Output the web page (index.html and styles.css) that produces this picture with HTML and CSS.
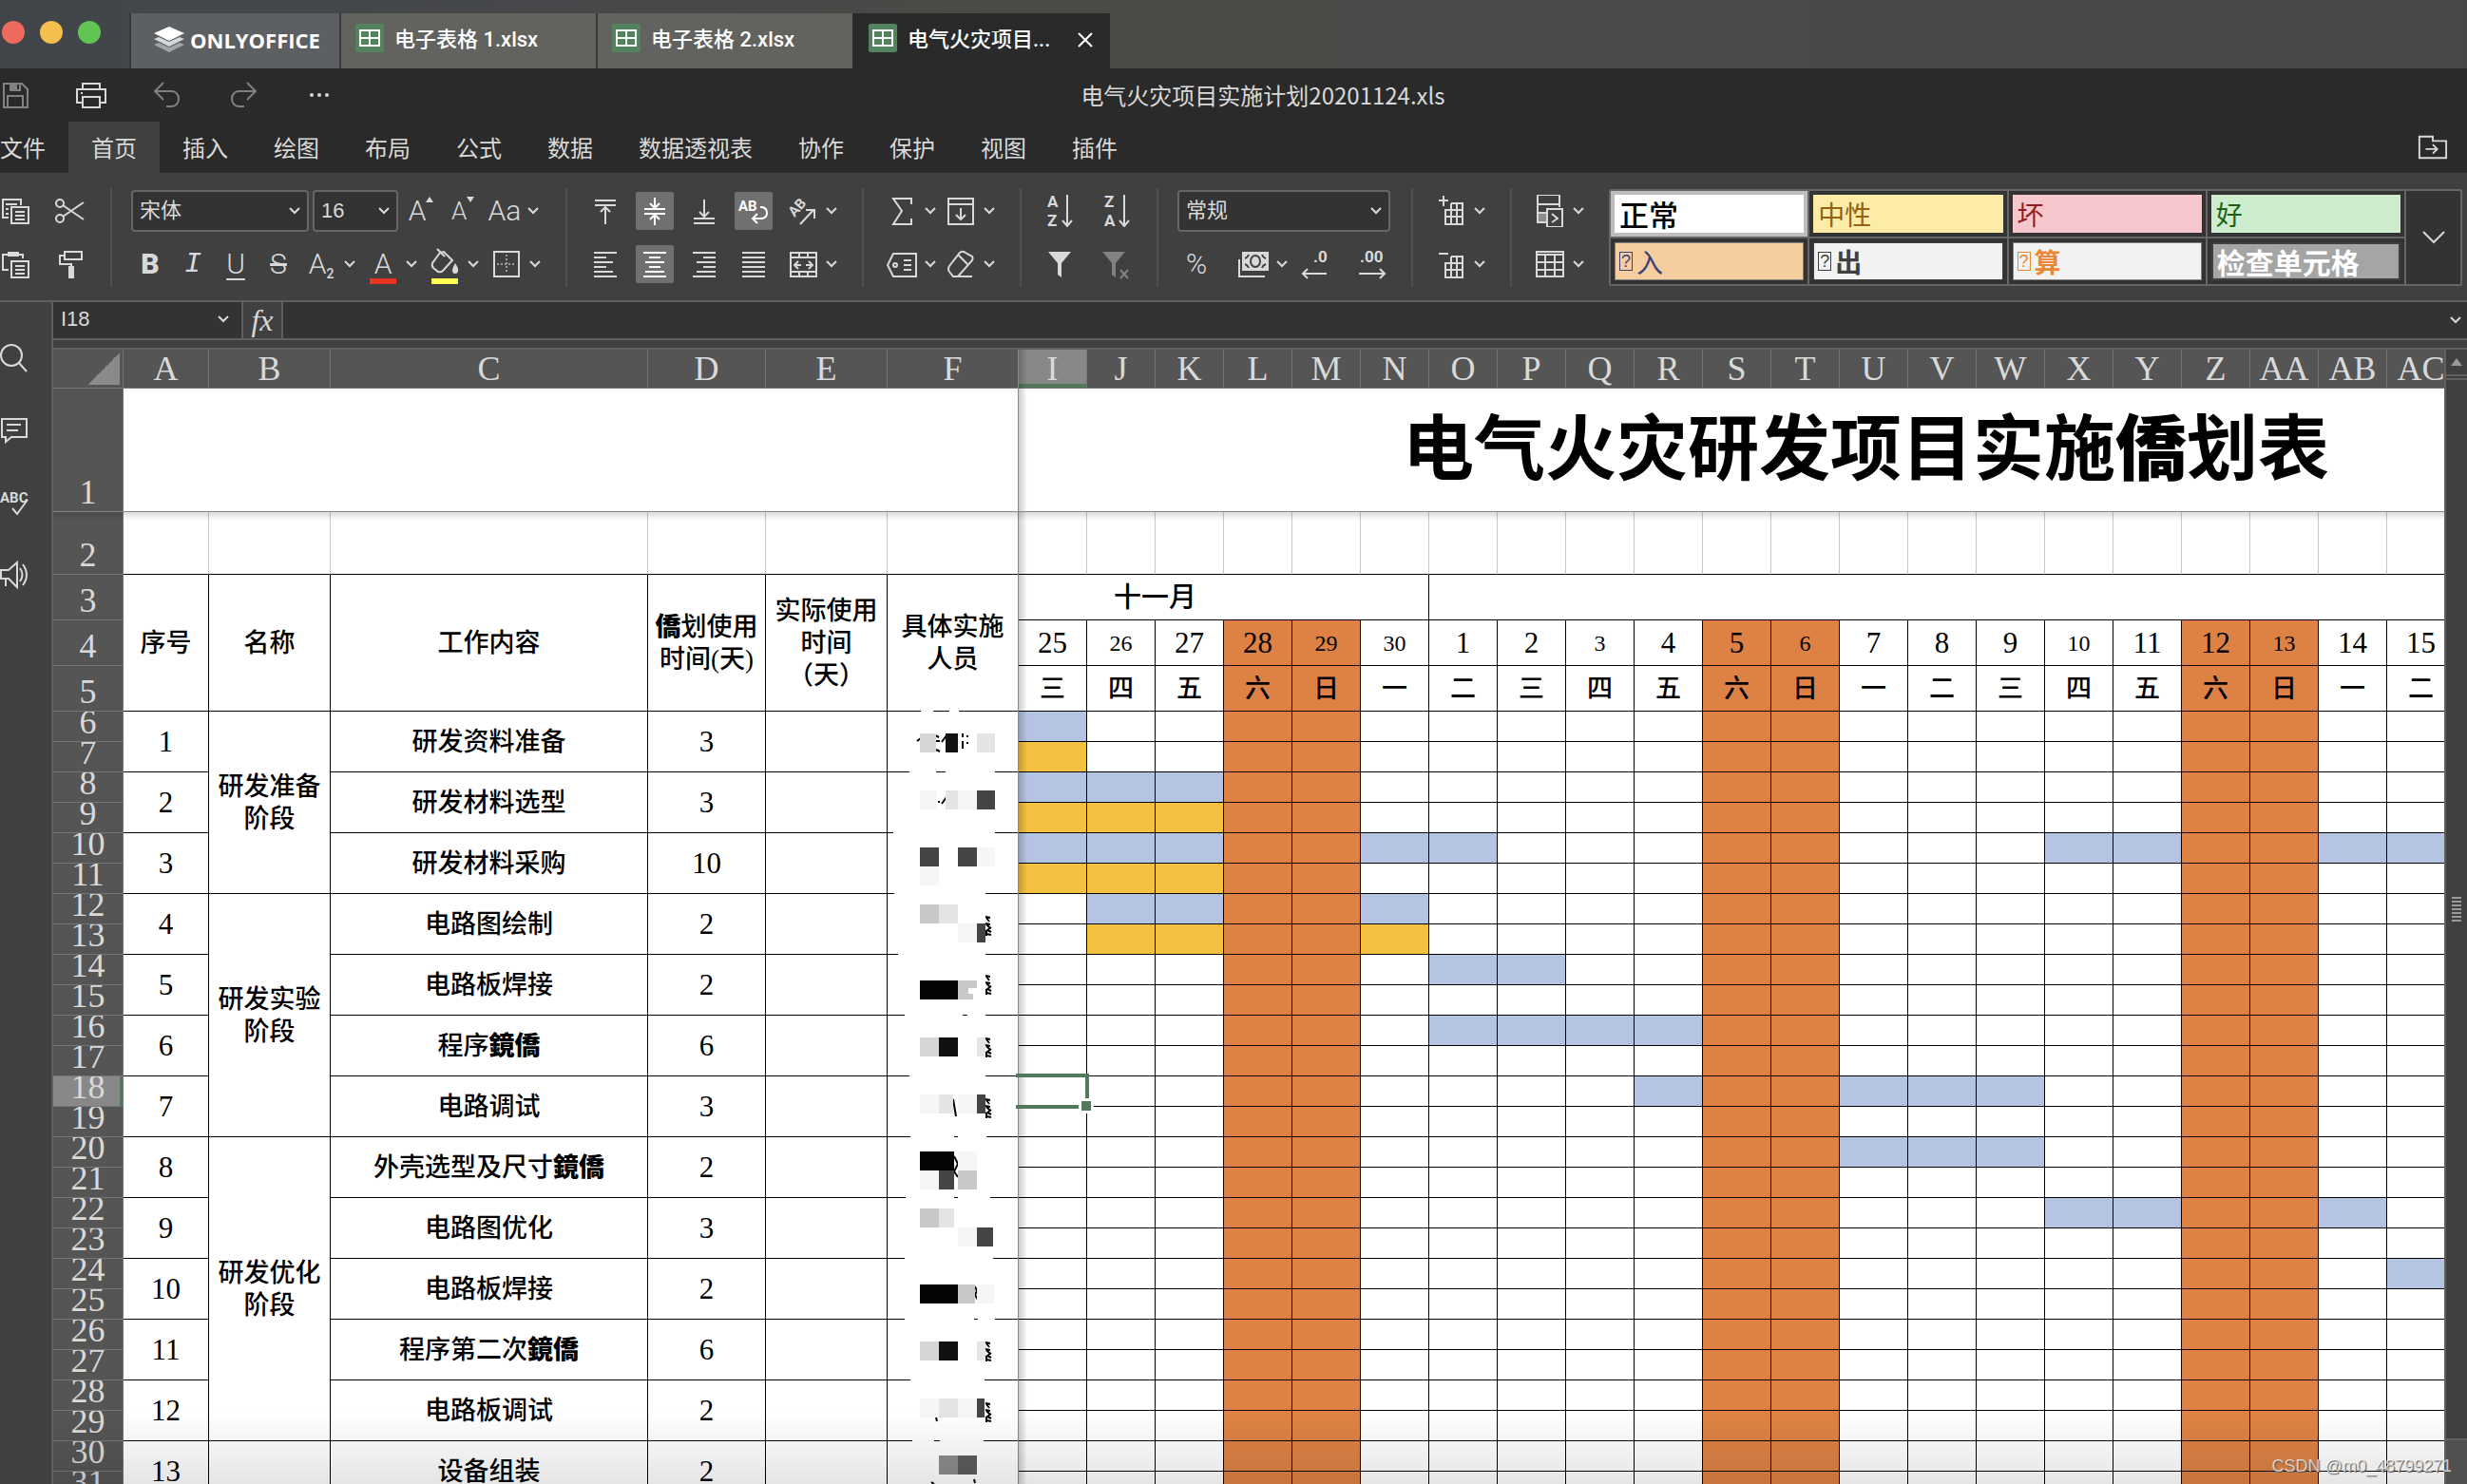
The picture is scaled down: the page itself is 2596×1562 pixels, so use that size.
FILE: index.html
```html
<!DOCTYPE html>
<html lang="zh-CN">
<head>
<meta charset="utf-8">
<title>电气火灾项目实施计划20201124.xls</title>
<link rel="stylesheet" href="styles.css">
</head>
<body>
<svg class="sprite" aria-hidden="true">
  <symbol id="caret" viewBox="0 0 12 8"><path d="M1 1l5 5 5-5"/></symbol>
  <symbol id="sheet" viewBox="0 0 30 30"><rect width="30" height="30" rx="2" fill="#52835d" stroke="none"/><path d="M5 7h20v16H5zM15 7v16M5 15h20" stroke="#fff"/></symbol>
  <symbol id="save" viewBox="0 0 32 32"><path d="M4 4h19l6 6v19H4zM8 29V17h16v12M11 4v7h10V4"/><path d="M11 4h6v7h-6z" fill="currentColor"/></symbol>
  <symbol id="print" viewBox="0 0 32 32"><path d="M7 10V4h18v6M7 24H1V10h30v14h-6M7 18h18v11H7z"/><path d="M5 14h2"/></symbol>
  <symbol id="undo" viewBox="0 0 32 32"><path d="M12 3l-9 9 9 9M3 12h18a7 8 0 0 1 0 16h-6"/></symbol>
  <symbol id="redo" viewBox="0 0 32 32"><path d="M20 3l9 9-9 9M29 12H11a7 8 0 0 0 0 16h6"/></symbol>
  <symbol id="dots" viewBox="0 0 32 32"><g fill="currentColor" stroke="none"><circle cx="8" cy="16" r="2"/><circle cx="16" cy="16" r="2"/><circle cx="24" cy="16" r="2"/></g></symbol>
  <symbol id="folder" viewBox="0 0 34 28"><path d="M2 2h15v5h15v19H2zM9 16h13M17 11l5 5-5 5"/></symbol>
  <symbol id="copy" viewBox="0 0 32 32"><path d="M9 23H3V4h19v6M6 9h12M6 14h3M6 19h3M12 12h18v17H12zM16 17h10M16 21h10M16 25h10"/></symbol>
  <symbol id="paste" viewBox="0 0 32 32"><path d="M9 22H3V6h5M20 6h4v4M12 13h18v17H12zM16 18h10M16 22h10M16 26h10"/><path d="M8 3h12v5H8z" fill="currentColor" stroke="none"/></symbol>
  <symbol id="cut" viewBox="0 0 32 32"><circle cx="5" cy="8" r="4"/><circle cx="5" cy="24" r="4"/><path d="M8 10l22 15M8 22L30 7"/></symbol>
  <symbol id="painter" viewBox="0 0 32 32"><path d="M10 3h18v8H10zM10 7H5v9h12v3"/><path d="M14 18h6v13h-6z" fill="currentColor" stroke="none"/></symbol>
  <symbol id="fill" viewBox="0 0 32 32"><path d="M8 2l8 8M11 6L3 17q-1 3 1 5l5 4q3 1 5-1l10-11L15 5z"/><path d="M27 17q4 6 3 8a3 3 0 0 1-6 0q0-3 3-8z" fill="currentColor" stroke="none"/></symbol>
  <symbol id="border" viewBox="0 0 32 32"><path d="M3 3h26v26H3z"/><path d="M16 6v20M6 16h20" stroke-dasharray="2 2" opacity=".6"/></symbol>
  <symbol id="up" viewBox="0 0 8 6"><path d="M0 6l4-6 4 6z" fill="currentColor" stroke="none"/></symbol>
  <symbol id="dn" viewBox="0 0 8 6"><path d="M0 0l4 6 4-6z" fill="currentColor" stroke="none"/></symbol>
  <symbol id="vtop" viewBox="0 0 32 32"><path d="M5 5h22M5 10h22M16 12v18M11 17l5-5 5 5"/></symbol>
  <symbol id="vmid" viewBox="0 0 32 32"><path d="M5 14h22M5 19h22M16 2v10M11 8l5 5 5-5M16 31V21M11 25l5-5 5 5"/></symbol>
  <symbol id="vbot" viewBox="0 0 32 32"><path d="M5 24h22M5 29h22M16 4v18M11 17l5 5 5-5"/></symbol>
  <symbol id="wrap" viewBox="0 0 32 32"><text x="0" y="16" font-size="15">AB</text><path d="M23 12h2q5 1 5 6t-5 6h-9M20 19l-5 5 5 5"/></symbol>
  <symbol id="orient" viewBox="0 0 32 32"><text x="7" y="23" font-size="15" transform="rotate(-48 7 23)">AB</text><path d="M13 30l14-15M19 15h9v9"/></symbol>
  <symbol id="left" viewBox="0 0 32 32"><path d="M4 4h24M4 9h13M4 14h20M4 19h13M4 24h20M4 29h24"/></symbol>
  <symbol id="center" viewBox="0 0 32 32"><path d="M4 4h24M10 9h12M6 14h20M10 19h12M6 24h20M4 29h24"/></symbol>
  <symbol id="right" viewBox="0 0 32 32"><path d="M4 4h24M15 9h13M8 14h20M15 19h13M8 24h20M4 29h24"/></symbol>
  <symbol id="justify" viewBox="0 0 32 32"><path d="M4 4h24M4 9h24M4 14h24M4 19h24M4 24h24M4 29h24"/></symbol>
  <symbol id="merge" viewBox="0 0 32 32"><path d="M3 4h27v25H3zM3 9h27M3 24h27M12 4v5M21 4v5M12 24v5M21 24v5M8 17h6M11 13l-4 4 4 4M25 17h-6M22 13l4 4-4 4"/></symbol>
  <symbol id="sum" viewBox="0 0 32 32"><path d="M26 9V3H7l9 13L7 30h19v-6"/></symbol>
  <symbol id="down" viewBox="0 0 32 32"><path d="M3 3h26v27H3zM3 9h26M16 13v12M11 20l5 5 5-5"/></symbol>
  <symbol id="tag" viewBox="0 0 32 32"><path d="M7 5h24v24H7L1 17zM18 12h8M18 17h8M18 22h8"/><circle cx="9" cy="17" r="2"/></symbol>
  <symbol id="eraser" viewBox="0 0 32 32"><path d="M19 3q-2-1-4 1L4 18q-2 3 0 6l4 5h5l15-17q1-2 0-4zM14 7l9 9M8 29h20"/></symbol>
  <symbol id="az" viewBox="0 0 32 34"><text x="3" y="13" font-size="17">A</text><text x="3" y="33" font-size="17">Z</text><path d="M24 0v32M19 27l5 6 5-6"/></symbol>
  <symbol id="za" viewBox="0 0 32 34"><text x="3" y="13" font-size="17">Z</text><text x="3" y="33" font-size="17">A</text><path d="M24 0v32M19 27l5 6 5-6"/></symbol>
  <symbol id="filter" viewBox="0 0 32 32"><path d="M4 3h24L18 15v15l-4-3V15z" fill="currentColor" stroke="none"/></symbol>
  <symbol id="unfilter" viewBox="0 0 32 32"><path d="M1 3h24L15 15v15l-4-3V15z" fill="currentColor" stroke="none"/><path d="M20 22l8 9M28 22l-8 9"/></symbol>
  <symbol id="money" viewBox="0 0 32 32"><path d="M1 11v18h27"/><path d="M4 3h28v20H4z" fill="currentColor" stroke="none"/><ellipse cx="18" cy="13" rx="6" ry="7" fill="#404040" stroke="none"/><ellipse cx="18" cy="13" rx="4" ry="5" fill="currentColor" stroke="none"/><path d="M7 10q3-1 4-4M7 16q3 1 4 4M29 10q-3-1-4-4M29 16q-3 1-4 4" stroke="#404040"/></symbol>
  <symbol id="decless" viewBox="0 0 32 32"><text x="15" y="14" font-size="17">.0</text><path d="M29 26H4M9 21l-5 5 5 5"/></symbol>
  <symbol id="decmore" viewBox="0 0 32 32"><text x="4" y="14" font-size="17">.00</text><path d="M3 26h27M25 21l5 5-5 5"/></symbol>
  <symbol id="insert" viewBox="0 0 32 34"><path d="M3 6h10M8 1v11M16 9h12v22H10V16h18M10 23h18M16 9v22M22 9v22"/></symbol>
  <symbol id="remove" viewBox="0 0 32 34"><path d="M3 6h10M16 9h12v22H10V16h18M10 23h18M16 9v22M22 9v22"/></symbol>
  <symbol id="cond" viewBox="0 0 32 34"><path d="M3 19h10v11H3z" fill="#8c8c8c" stroke="none"/><path d="M13 29H3V0h23v13M3 10h23M3 19h10M13 15h16v19H13zM18 20l6 5-6 4"/></symbol>
  <symbol id="table" viewBox="0 0 32 32"><path d="M2 3h28v26H2zM2 6h28M2 14h28M2 22h28M11 7v21M21 7v21"/></symbol>
  <symbol id="search" viewBox="0 0 30 32"><circle cx="12" cy="13" r="11"/><path d="M20 21l8 9"/></symbol>
  <symbol id="comment" viewBox="0 0 30 32"><path d="M2 4h26v19H12l-6 5v-5H2zM7 10h15M7 16h12"/></symbol>
  <symbol id="spell" viewBox="0 0 30 32"><text x="0" y="16" font-size="15">ABC</text><path d="M13 22l5 6 11-15"/></symbol>
  <symbol id="speaker" viewBox="0 0 30 32"><path d="M18 3l-9 8H1v9h8l9 9zM6 20v8M21 9q5 7 0 14M24 5q8 11 0 22"/></symbol>
  <symbol id="scrap" viewBox="0 0 8 24"><path d="M0 2l5 1M1 3l3 4M0 9l5 1M1 10l4 4M6 13l-4 3 4 2M1 20l5 1M1 16v6"/></symbol>
</svg>

<header class="tabs">
  <div class="lights"><i class="red"></i><i class="amber"></i><i class="green"></i></div>
  <button class="tab brand">
    <svg class="logo" viewBox="0 0 32 28"><path d="M0 19l16 8 16-8-5-2-11 5-11-5z" fill="#a3a6a8"/><path d="M0 13l16 8 16-8-5-2-11 5-11-5z" fill="#d5d7d8"/><path d="M16 0L0 7l16 8 16-8z" fill="#fff"/></svg>
    <b>ONLYOFFICE</b>
  </button>
  <button class="tab"><svg class="i30"><use href="#sheet"/></svg>电子表格 1.xlsx</button>
  <button class="tab"><svg class="i30"><use href="#sheet"/></svg>电子表格 2.xlsx</button>
  <button class="tab current"><svg class="i30"><use href="#sheet"/></svg>电气火灾项目...<svg class="close" viewBox="0 0 16 16"><path d="M1 1l14 14M15 1L1 15"/></svg></button>
</header>

<div class="titlebar">
  <div class="quick">
    <button class="dim" aria-label="保存"><svg><use href="#save"/></svg></button>
    <button aria-label="打印"><svg><use href="#print"/></svg></button>
    <button class="dim" aria-label="撤消"><svg><use href="#undo"/></svg></button>
    <button class="dim" aria-label="重做"><svg><use href="#redo"/></svg></button>
    <button aria-label="更多"><svg><use href="#dots"/></svg></button>
  </div>
  <div class="doc">电气火灾项目实施计划20201124.xls</div>
</div>

<nav class="menu">
  <button>文件</button><button class="on">首页</button><button>插入</button><button>绘图</button><button>布局</button><button>公式</button><button>数据</button><button>数据透视表</button><button>协作</button><button>保护</button><button>视图</button><button>插件</button>
  <button class="open" aria-label="打开文件位置"><svg><use href="#folder"/></svg></button>
</nav>

<div class="toolbar">
  <div class="group clip">
    <div class="row"><button class="edge" aria-label="复制"><svg><use href="#copy"/></svg></button><button aria-label="剪切"><svg><use href="#cut"/></svg></button></div>
    <div class="row"><button class="edge" aria-label="粘贴"><svg><use href="#paste"/></svg></button><button aria-label="格式刷"><svg><use href="#painter"/></svg></button></div>
  </div>
  <i class="sep"></i>
  <div class="group font">
    <div class="row">
      <label class="pick face"><select aria-label="字体"><option>宋体</option></select><svg class="caret"><use href="#caret"/></svg></label>
      <label class="pick size"><select aria-label="字号"><option>16</option></select><svg class="caret"><use href="#caret"/></svg></label>
      <button class="glyph">A<svg class="tip"><use href="#up"/></svg></button><button class="glyph small">A<svg class="tip"><use href="#dn"/></svg></button><button class="glyph drop"><span>Aa</span><svg class="caret"><use href="#caret"/></svg></button>
    </div>
    <div class="row">
      <button class="glyph"><b>B</b></button><button class="glyph mono"><em>I</em></button><button class="glyph"><u>U</u></button><button class="glyph"><s>S</s></button>
      <button class="glyph drop"><span>A<small>2</small></span><svg class="caret"><use href="#caret"/></svg></button>
      <button class="glyph drop"><span class="ink">A</span><svg class="caret"><use href="#caret"/></svg></button>
      <button class="drop" aria-label="填充颜色"><span class="paint"><svg><use href="#fill"/></svg></span><svg class="caret"><use href="#caret"/></svg></button>
      <button class="drop" aria-label="边框"><span><svg><use href="#border"/></svg></span><svg class="caret"><use href="#caret"/></svg></button>
    </div>
  </div>
  <i class="sep"></i>
  <div class="group align">
    <div class="row"><button aria-label="顶端对齐"><svg><use href="#vtop"/></svg></button><button class="on" aria-label="垂直居中"><svg><use href="#vmid"/></svg></button><button aria-label="底端对齐"><svg><use href="#vbot"/></svg></button><button class="on"><svg><use href="#wrap"/></svg></button><button class="drop"><span><svg><use href="#orient"/></svg></span><svg class="caret"><use href="#caret"/></svg></button></div>
    <div class="row"><button aria-label="左对齐"><svg><use href="#left"/></svg></button><button class="on" aria-label="居中"><svg><use href="#center"/></svg></button><button aria-label="右对齐"><svg><use href="#right"/></svg></button><button aria-label="两端对齐"><svg><use href="#justify"/></svg></button><button class="drop" aria-label="合并"><span><svg><use href="#merge"/></svg></span><svg class="caret"><use href="#caret"/></svg></button></div>
  </div>
  <i class="sep"></i>
  <div class="group calc">
    <div class="row"><button class="drop" aria-label="求和"><span><svg><use href="#sum"/></svg></span><svg class="caret"><use href="#caret"/></svg></button><button class="drop" aria-label="填充"><span><svg><use href="#down"/></svg></span><svg class="caret"><use href="#caret"/></svg></button></div>
    <div class="row"><button class="drop" aria-label="命名范围"><span><svg><use href="#tag"/></svg></span><svg class="caret"><use href="#caret"/></svg></button><button class="drop" aria-label="清除"><span><svg><use href="#eraser"/></svg></span><svg class="caret"><use href="#caret"/></svg></button></div>
  </div>
  <i class="sep"></i>
  <div class="group sort">
    <div class="row"><button><svg class="tall"><use href="#az"/></svg></button><button><svg class="tall"><use href="#za"/></svg></button></div>
    <div class="row"><button aria-label="筛选"><svg><use href="#filter"/></svg></button><button class="dim" aria-label="清除筛选"><svg><use href="#unfilter"/></svg></button></div>
  </div>
  <i class="sep"></i>
  <div class="group number">
    <div class="row"><label class="pick format"><select aria-label="数字格式"><option>常规</option></select><svg class="caret"><use href="#caret"/></svg></label></div>
    <div class="row"><button class="glyph">%</button><div class="pair"><button class="drop" aria-label="会计格式"><span><svg><use href="#money"/></svg></span><svg class="caret"><use href="#caret"/></svg></button><button><svg><use href="#decless"/></svg></button></div><button><svg><use href="#decmore"/></svg></button></div>
  </div>
  <i class="sep"></i>
  <div class="group">
    <div class="row"><button class="drop" aria-label="插入单元格"><span><svg class="tall"><use href="#insert"/></svg></span><svg class="caret"><use href="#caret"/></svg></button></div>
    <div class="row"><button class="drop" aria-label="删除单元格"><span><svg class="tall"><use href="#remove"/></svg></span><svg class="caret"><use href="#caret"/></svg></button></div>
  </div>
  <i class="sep"></i>
  <div class="group">
    <div class="row"><button class="drop" aria-label="条件格式"><span><svg class="tall"><use href="#cond"/></svg></span><svg class="caret"><use href="#caret"/></svg></button></div>
    <div class="row"><button class="drop" aria-label="套用表格格式"><span><svg><use href="#table"/></svg></span><svg class="caret"><use href="#caret"/></svg></button></div>
  </div>
  <div class="styles">
    <div class="swatches">
      <button class="chosen"><span class="normal">正常</span></button>
      <button><span class="neutral">中性</span></button>
      <button><span class="bad">坏</span></button>
      <button><span class="good">好</span></button>
      <button><span class="input"><i>?</i>入</span></button>
      <button><span class="output"><i>?</i>出</span></button>
      <button><span class="calcstyle"><i>?</i>算</span></button>
      <button><span class="check">检查单元格</span></button>
    </div>
    <button class="more" aria-label="更多样式"><svg viewBox="0 0 24 14"><path d="M1 1l11 11L23 1"/></svg></button>
  </div>
</div>

<div class="work">
  <aside class="side">
    <button aria-label="查找"><svg><use href="#search"/></svg></button>
    <button aria-label="批注"><svg><use href="#comment"/></svg></button>
    <button><svg><use href="#spell"/></svg></button>
    <button aria-label="反馈"><svg><use href="#speaker"/></svg></button>
  </aside>
  <main class="main">
    <div class="formula">
      <label class="name"><input value="I18" aria-label="名称框"><svg class="caret"><use href="#caret"/></svg></label>
      <button class="fx">fx</button>
      <label class="expr"><input aria-label="编辑栏"><svg class="caret"><use href="#caret"/></svg></label>
    </div>
    <div class="sheet">
      <div class="view">
        <table class="grid" id="grid"></table>
        <svg class="mosaic" viewBox="934 740 138 822" aria-hidden="true">
          <path stroke="#fff" stroke-width="3" d="M969 748.5h13M999 748.5h10M957 812.5h28M995 812.5h52M940 876.5h107M941 940.5h96M945 1004.5h92M952 1068.5h61M1018 1068.5h19M957 1132.5h80M958 1196.5h46M1008 1196.5h30M953 1260.5h51M1008 1260.5h34M952 1324.5h93M952 1388.5h73M1029 1388.5h18M958 1452.5h78M960 1516.5h23M989 1516.5h46"/>
          <g stroke="#000" stroke-width="2"><path d="M965 780l4-3M984 774l4 2M984 780h5M985 789l4 2M991 781l5-7M1013 772v4M1013 780v8M1018 774v2M1018 781v2M987 844h2M991 846l5-7M1003 1157l3 18M1004 1217l4 8-4 8 4 6M1026 1354l2 5-2 4 3 5M985 1492l1 4M980 1560l3 2M1025 1557l1 4"/></g>
          <g stroke="none">
            <path fill="#d6d6d4" d="M968 772h17v20h-17zM968 1092h20v20h-20zM968 1412h20v20h-20z"/>
            <path fill="#111" d="M995 772h13v20h-13zM988 1092h20v20h-20zM988 1412h20v20h-20z"/>
            <path fill="#e4e4e4" d="M1028 772h19v20h-19zM995 832h13v20h-13zM988 952h20v20h-20zM1028 1092h9v20h-9zM988 1152h15v20h-15zM988 1272h16v20h-16zM1028 1412h11l-3 20h-8zM988 1472h20v20h-20z"/>
            <path fill="#f6f6f6" d="M968 832h18v20h-18zM1008 832h20v20h-20zM1028 892h19v20h-19zM968 912h20v20h-20zM1008 972h20v20h-20zM968 1152h20v20h-20zM1008 1152h20v20h-20zM1008 1212h20v20h-20zM968 1232h20v20h-20zM1008 1292h20v20h-20zM1028 1352h18v20h-18zM968 1472h20v20h-20zM1008 1472h20v20h-20z"/>
            <path fill="#444" d="M1028 832h19v20h-19zM968 892h20v20h-20zM1008 892h20v20h-20zM1028 972h9v20h-9zM1028 1152h9v20h-9zM988 1232h16v20h-16zM1028 1292h17v20h-17zM1028 1472h8v20h-8z"/>
            <path fill="#c8c8c8" d="M968 952h20v20h-20zM1008 1032h20v8h-9v6h5v6h-16zM1008 1232h20v20h-20zM968 1272h20v20h-20zM1008 1352h18v20h-18z"/>
            <path fill="#040404" d="M968 1032h40v20h-40zM968 1212h36v20h-36zM968 1352h40v20h-40z"/>
            <path fill="#8c8c8c" d="M988 1532h20v20h-20z"/><path fill="#5c5c5c" d="M1008 1532h20v20h-20z"/>
          </g>
          <g stroke="#000" stroke-width="2">
            <use href="#scrap" x="1037" y="963" width="8" height="24"/><use href="#scrap" x="1037" y="1025" width="8" height="24"/><use href="#scrap" x="1037" y="1091" width="8" height="24"/><use href="#scrap" x="1037" y="1155" width="8" height="24"/><use href="#scrap" x="1037" y="1411" width="8" height="24"/><use href="#scrap" x="1037" y="1475" width="8" height="24"/>
          </g>
        </svg>
        <div class="freeze-col"></div>
        <div class="freeze-row"></div>
        <div class="cursor"></div>
        <div class="shade"></div>
      </div>
      <div class="scroll"><button class="up" aria-label="向上"></button><div class="thumb"><i></i></div><div class="rest"></div></div>
      <div class="credit">CSDN @m0_48799271</div>
    </div>
  </main>
</div>
<script src="sheet.js"></script>
</body>
</html>
```

FILE: styles.css
```css
* { box-sizing: border-box; }
body {
  margin: 0; height: 100vh; overflow: hidden; display: flex; flex-direction: column;
  background: #404040; color: #d9d9d9;
  font: 24px/32px "Noto Sans CJK SC", sans-serif;
}
button, input, select { font: inherit; color: inherit; background: none; border: 0; padding: 0; margin: 0; outline: 0; }
button { display: flex; align-items: center; justify-content: center; white-space: nowrap; }
svg { width: 32px; height: 32px; flex: none; fill: none; stroke: currentColor; stroke-width: 2; overflow: visible; }
svg text { fill: currentColor; stroke: none; font-family: Roboto, sans-serif; font-weight: 700; }
.sprite { display: none; }
.caret { width: 12px; height: 8px; stroke-width: 2; }
.dim { color: #828282; }

.tabs { display: flex; height: 72px; flex: none; padding-top: 14px; background: linear-gradient(90deg, #414549, #45474a 20%, #4b4a45 45%, #4a4a4a 60%, #474747); }
.lights { width: 136px; display: flex; gap: 16px; padding: 8px 2px; }
.lights i { width: 24px; height: 24px; border-radius: 50%; }
.red { background: #ee6a5f; }
.amber { background: #f5bf4f; }
.green { background: #61c554; }
.tab { width: 270px; border-left: 2px solid #38393a; background: #62625f; color: #fff; font-family: Roboto, "Noto Sans CJK SC", sans-serif; font-size: 22px; font-weight: 500; justify-content: flex-start; gap: 11px; padding: 0 0 2px 15px; }
.brand { width: 221px; background: #5d6062; gap: 6px; padding-left: 24px; font-family: "Open Sans", sans-serif; }
.logo { width: 32px; height: 28px; stroke: none; }
.i30 { width: 30px; height: 30px; margin-bottom: 4px; }
.current { width: 271px; background: #2a2a2a; border-color: #2a2a2a; }
.close { width: 16px; height: 16px; margin: 0 18px 0 auto; }

.titlebar { display: grid; grid-template-columns: 1fr auto 1fr; height: 56px; align-items: center; background: #2a2a2a; flex: none; }
.quick { display: flex; gap: 40px; margin-left: -4px; }
.quick button { width: 40px; height: 40px; }
.doc { padding-left: 62px; }
.menu { display: flex; height: 54px; background: #2a2a2a; flex: none; }
.menu button { padding: 0 24px; }
.menu button:first-child { margin-left: -24px; }
.menu .on { background: #404040; }
.menu .open { margin-left: auto; padding: 0 20px; }
.open svg { width: 32px; height: 28px; }

.toolbar { display: flex; height: 134px; flex: none; align-items: center; padding-top: 2px; }
.group { display: flex; flex-direction: column; gap: 16px; }
.row { display: flex; height: 40px; align-items: center; }
.row button { width: 40px; height: 40px; border-radius: 2px; }
.row .drop { width: 60px; justify-content: flex-start; }
.drop > span { width: 40px; height: 40px; display: flex; align-items: center; justify-content: center; }
.drop .caret { margin-left: 4px; }
.row .on { background: #707070; color: #fff; }
.sep { width: 2px; height: 104px; margin: 0 20px 0 22px; background: #505050; }
.row .edge { width: 32px; margin-right: 22px; }
.font .row { gap: 5px; }
.font .row:first-child { gap: 4px; }
.align .row { gap: 12px; }
.calc .row { gap: 2px; }
.sort .row { gap: 20px; }
.number .row { gap: 20px; }
.pair { display: flex; gap: 4px; }
.tall { height: 34px; }
.pick { display: grid; align-items: center; }
.pick > * { grid-area: 1 / 1; }
.pick .caret { justify-self: end; margin-right: 9px; pointer-events: none; }
.pick select { appearance: none; height: 44px; width: 100%; padding: 0 7px; font: 22px/30px "Liberation Sans", "Noto Sans CJK SC", sans-serif; background: #333; border: 2px solid #666; border-radius: 4px; }
.face { width: 187px; }
.size { width: 90px; }
.format { width: 224px; }
.glyph { font: 300 30px/32px Roboto, sans-serif; }
.glyph.small { font-size: 26px; }
.glyph.mono { font-family: "Liberation Mono", monospace; }
.glyph b { font-weight: 900; }
.tip { width: 8px; height: 6px; align-self: flex-start; margin-top: 5px; }
.glyph small { font-size: 14px; line-height: 14px; font-weight: 500; align-self: flex-end; margin-bottom: 3px; }
.glyph u { text-underline-offset: 5px; text-decoration-thickness: 2px; }
.drop > .ink { border-bottom: 6px solid #e93323; width: 28px; height: 36px; margin: 6px 6px 0; }
.drop > .paint { border-bottom: 6px solid #ffff54; width: 28px; height: 36px; margin: 6px 6px 0; }
.paint svg { margin-bottom: 4px; }
.styles { display: flex; flex: 1; margin: 0 5px 0 22px; border: 2px solid #666; border-radius: 2px; background: #333; }
.swatches { flex: 1; display: grid; grid-template-columns: repeat(4, 1fr); gap: 2px; background: #666; }
.swatches button { height: 48px; padding: 4px; background: #333; font-size: 28px; }
.swatches .chosen { background: #bdbdbd; }
.swatches span { flex: 1; height: 40px; display: flex; align-items: center; gap: 4px; padding-left: 4px; border: 1px solid transparent; }
.swatches i { font: 18px/18px "Liberation Sans", sans-serif; border: 1px solid; padding: 0 1px; }
.swatches .normal { background: #fff; color: #000; font-size: 31px; font-weight: 500; }
.neutral { background: #fdeca6; color: #946012; }
.bad { background: #f6c8ce; color: #951b1e; }
.good { background: #cdedce; color: #1d6115; }
.swatches .input { background: #f6cd9f; color: #3f3f76; border-color: #7f7f7f; }
.swatches .output { background: #f2f2f2; color: #3f3f3f; border-color: #3f3f3f; font-weight: 700; }
.swatches .calcstyle { background: #f2f2f2; color: #e98732; border-color: #7f7f7f; font-weight: 700; }
.swatches .check { background: #a5a5a5; color: #fff; font-size: 30px; font-weight: 700; border: 2px solid #3f3f3f; }
.more { width: 59px; border-left: 2px solid #666; }
.more svg { width: 24px; height: 14px; }

.work { flex: 1; min-height: 0; display: flex; border-top: 2px solid #606060; }
.side { width: 56px; border-right: 2px solid #606060; display: flex; flex-direction: column; gap: 36px; padding-top: 39px; align-items: flex-start; }
.side button { width: 30px; height: 40px; }
.side svg { width: 30px; }
.main { flex: 1; min-width: 0; display: flex; flex-direction: column; }
.formula { display: flex; height: 40px; flex: none; border-bottom: 2px solid #606060; background: #333; }
.formula label { display: flex; align-items: center; }
.formula input { flex: 1; min-width: 0; font: 22px/30px "Liberation Sans", sans-serif; }
.name { width: 198px; padding: 0 13px 2px 8px; }
.formula .fx { width: 44px; background: #404040; border: solid #606060; border-width: 0 2px; font: italic 32px/34px "Liberation Serif", serif; }
.expr { flex: 1; padding: 0 6px; }

.sheet { flex: 1; min-height: 0; display: flex; position: relative; margin-top: 8px; border-top: 2px solid #606060; }
.view { flex: 1; min-width: 0; position: relative; overflow: hidden; background: #fff; }
.grid { table-layout: fixed; width: 2528px; border-spacing: 0; color: #000; font: 500 27px/34px "Liberation Serif", "Noto Sans CJK SC", serif; }
.w-head { width: 74px; }
.w-a { width: 90px; }
.w-b { width: 128px; }
.w-c { width: 334px; }
.w-d { width: 124px; }
.w-e { width: 128px; }
.w-f { width: 138px; }
.w-day { width: 72px; }
.grid th, .grid td { padding: 0; text-align: center; border: solid #000; border-width: 0 1px 1px 0; }
.grid th { background: #555; border-color: #757575; color: #d9d9d9; font-weight: 400; font-size: 36px; line-height: 40px; }
.grid thead th { height: 41px; }
.grid .corner { background: linear-gradient(135deg, transparent 50%, #8a8a8a 50%) no-repeat 35px 4px / 35px 33px, #555; }
.label { display: flex; flex-direction: column; justify-content: flex-end; height: 31px; overflow: hidden; }
.r1 .label { height: 129px; }
.r2 .label { height: 65px; }
.r3 .label { height: 47px; }
.grid .picked { background: #888; }
.grid thead .picked { box-shadow: inset 0 -4px #52795c; }
.grid tbody .picked { box-shadow: inset -3px 0 #52795c; }
.grid .r1 td { border-right-color: transparent; border-bottom-color: #888; }
.grid .r2 td { border-right-color: #c6c6c6; }
.grid .sheet-title { font-size: 75px; line-height: 100px; font-weight: 700; padding-left: 272px; }
.grid td b { font-weight: 900; }
.grid .month { font-size: 29px; padding-right: 144px; }
.grid .num { font-size: 31px; }
.grid .num-small { font-size: 24px; }
.grid .weekend { background: #dd8244; }
.grid .plan { background: #b5c4e3; }
.grid .actual { background: #f4c142; }
.mosaic { position: absolute; left: 878px; top: 372px; width: 138px; height: 822px; }
.freeze-col { position: absolute; left: 1015px; top: 0; bottom: 0; width: 10px; border-left: 1px solid #888; background: linear-gradient(90deg, #0003, transparent); }
.freeze-row { position: absolute; left: 0; right: 0; top: 170px; height: 10px; border-top: 1px solid #888; background: linear-gradient(#0002, transparent); }
.cursor { position: absolute; left: 1013px; top: 762px; width: 77px; height: 37px; border: 4px solid #52795c; border-left: 0; }
.cursor::after { content: ""; position: absolute; right: -9px; bottom: -9px; width: 10px; height: 10px; border: 3px solid #fff; background: #52795c; }
.shade { position: absolute; left: 0; right: 0; bottom: 0; height: 76px; background: linear-gradient(transparent, #0000001a); }
.scroll { width: 24px; border-left: 2px solid #606060; display: flex; flex-direction: column; }
.up { height: 28px; border-bottom: 2px solid #606060; }
.up::before { content: ""; border: solid transparent; border-width: 0 6px 8px; border-bottom-color: #999; }
.thumb { flex: 1; margin-top: 2px; border: solid #606060; border-width: 2px 0; display: flex; align-items: center; justify-content: center; }
.thumb i { width: 10px; height: 26px; background: repeating-linear-gradient(#999 0 2px, transparent 2px 4px); }
.rest { height: 46px; background: #505050; }
.credit { position: absolute; right: 16px; bottom: 8px; font: 18px/22px "Liberation Sans", sans-serif; color: #ffffffb0; text-shadow: 1px 1px 1px #555; }
```

FILE: sheet.js
```js
const days = ['I','J','K','L','M','N','O','P','Q','R','S','T','U','V','W','X','Y','Z','AA','AB','AC'];
const dates = [25,26,27,28,29,30,1,2,3,4,5,6,7,8,9,10,11,12,13,14,15];
const smallDates = [26,29,30,3,6,10,13];
const week = '三四五六日一二'.split('');
const weekend = ['L','M','S','T','Z','AA'];
const tasks = [
  ['研发资料准备', 3], ['研发材料选型', 3], ['研发材料采购', 10], ['电路图绘制', 2], ['电路板焊接', 2],
  ['程序<b>鏡僑</b>', 6], ['电路调试', 3], ['外壳选型及尺寸<b>鏡僑</b>', 2], ['电路图优化', 3], ['电路板焊接', 2],
  ['程序第二次<b>鏡僑</b>', 6], ['电路板调试', 2], ['设备组装', 2]
];
const phases = { 0: ['研发准备<br>阶段', 6], 3: ['研发实验<br>阶段', 8], 7: ['研发优化<br>阶段', 10], 12: ['', 2] };
const plan = {
  6: ['I'], 8: ['I','J','K'], 10: ['I','J','K','N','O','X','Y','AB','AC'], 12: ['J','K','N'], 14: ['O','P'],
  16: ['O','P','Q','R'], 18: ['R','U','V','W'], 20: ['U','V','W'], 22: ['X','Y','AB'], 24: ['AC']
};
const actual = { 7: ['I'], 9: ['I','J','K'], 11: ['I','J','K'], 13: ['J','K','N'] };

const td = (text, cls = '', extra = '') => `<td class="${cls}" ${extra}>${text}</td>`;
const rowHead = n => `<th class="${n === 18 ? 'picked' : ''}" scope="row"><div class="label">${n}</div></th>`;
const isOff = c => weekend.includes(c) ? 'weekend' : '';

let html = '<colgroup>' + ['head','a','b','c','d','e','f'].map(w => `<col class="w-${w}">`).join('')
  + days.map(() => '<col class="w-day">').join('') + '</colgroup>';
html += '<thead><tr><th class="corner"></th>' + ['A','B','C','D','E','F', ...days]
  .map(c => `<th class="${c === 'I' ? 'picked' : ''}" scope="col">${c}</th>`).join('') + '</tr></thead><tbody>';
html += `<tr class="r1">${rowHead(1)}${td('', '', 'colspan="6"')}${td('电气火灾研发项目实施<b>僑</b>划表', 'sheet-title', 'colspan="21"')}</tr>`;
html += `<tr class="r2">${rowHead(2)}${td('').repeat(27)}</tr>`;
html += `<tr class="r3">${rowHead(3)}` + ['序号', '名称', '工作内容', '<b>僑</b>划使用<br>时间(天)', '实际使用<br>时间<br>（天）', '具体实施<br>人员']
  .map(t => td(t, '', 'rowspan="3"')).join('') + td('十一月', 'month', 'colspan="6"') + td('', '', 'colspan="15"') + '</tr>';
html += `<tr class="r3">${rowHead(4)}` + days.map((c, i) => td(dates[i], (smallDates.includes(dates[i]) ? 'num-small ' : 'num ') + isOff(c))).join('') + '</tr>';
html += `<tr class="r3">${rowHead(5)}` + days.map((c, i) => td(week[i % 7], isOff(c))).join('') + '</tr>';
for (let n = 6; n <= 31; n++) {
  const k = (n - 6) / 2;
  html += `<tr>${rowHead(n)}`;
  if (Number.isInteger(k)) {
    html += td(k + 1, 'num', 'rowspan="2"');
    if (phases[k]) html += td(phases[k][0], '', `rowspan="${phases[k][1]}"`);
    html += td(tasks[k][0], '', 'rowspan="2"') + td(tasks[k][1], 'num', 'rowspan="2"') + td('', '', 'rowspan="2"').repeat(2);
  }
  html += days.map(c => td('', (plan[n] || []).includes(c) ? 'plan' : (actual[n] || []).includes(c) ? 'actual' : isOff(c))).join('') + '</tr>';
}
document.getElementById('grid').innerHTML = html + '</tbody>';
```
